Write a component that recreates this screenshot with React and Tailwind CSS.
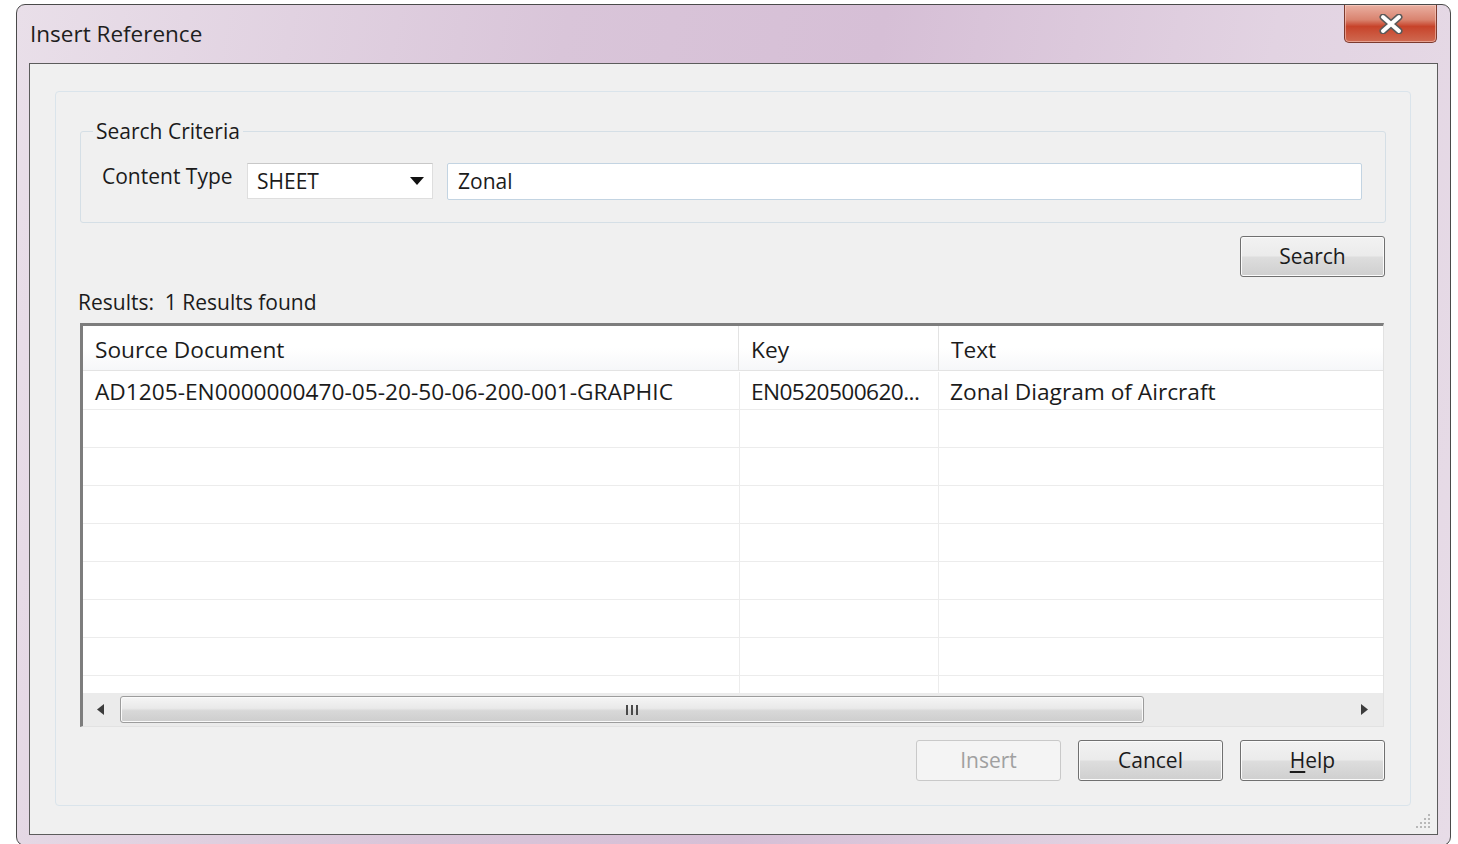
export default function App() {
  const rows = Array.from({ length: 9 });
  const btn =
    "w-[145px] h-[41px] rounded-[3px] border border-[#707070] bg-[linear-gradient(#f2f2f2_0%,#ebebeb_48%,#dddddd_52%,#cfcfcf_100%)] shadow-[inset_0_0_0_1px_#fbfbfb] flex items-center justify-center text-[#1b1b1b]";

  return (
    <div className="w-[1458px] h-[844px] bg-white overflow-hidden pl-[16px] pt-[4px] font-['Open_Sans',sans-serif] text-[21px] text-[#1b1b1b]">
      {/* window frame */}
      <div className="relative w-[1435px] h-[842px] rounded-[9px] border border-[#4a4a4a] bg-[linear-gradient(100deg,#e9dfe9_0%,#d9c5d9_35%,#d6bfd6_55%,#e2d3e2_80%,#e7dce7_100%)] px-[12px]">
        {/* title bar */}
        <div className="h-[58px] flex items-center pl-[1px]">
          <span className="text-[22.5px] leading-none text-[#1e1e1e]">Insert Reference</span>
        </div>
        <div className="absolute top-0 right-[13px] w-[93px] h-[38px] rounded-b-[5px] border border-t-0 border-[#7c3a2e] bg-[linear-gradient(#eab0a2_0%,#d9836f_40%,#c7432a_58%,#cf6a52_100%)] shadow-[inset_0_0_0_1px_rgba(255,220,210,0.5)] flex items-center justify-center">
          <svg width="26" height="20" viewBox="0 0 26 20">
            <path d="M5 3 L21 17 M21 3 L5 17" stroke="#5a5a5a" strokeWidth="7" strokeLinecap="round" />
            <path d="M5 3 L21 17 M21 3 L5 17" stroke="#ffffff" strokeWidth="4" strokeLinecap="round" />
          </svg>
        </div>

        {/* client area */}
        <div className="relative h-[772px] border border-[#5c5c5c] bg-[#f0f0f0]">
          <div className="ml-[25px] mt-[27px] w-[1356px] h-[715px] rounded-[4px] border border-[#dae4eb] px-[24px] pt-[39px] flex flex-col">
            {/* search criteria group */}
            <div className="relative h-[92px] rounded-[3px] border border-[#d5dfe6] pl-[21px] pt-[31px] flex items-start">
              <span className="absolute left-[12px] top-[-14px] px-[3px] bg-[#f0f0f0] leading-[26px]">Search Criteria</span>
              <span className="w-[145px] leading-[26px]">Content Type</span>
              <div className="w-[186px] h-[36px] border border-[#dedede] border-t-[#c8c8c8] bg-white flex items-center pl-[9px] pr-[8px]">
                <span className="flex-1 leading-none">SHEET</span>
                <svg width="14" height="8" viewBox="0 0 14 8">
                  <path d="M0 0 H14 L7 8 Z" fill="#111" />
                </svg>
              </div>
              <div className="ml-[14px] w-[915px] h-[37px] rounded-[2px] border border-[#c3d4e2] bg-white flex items-center pl-[10px]">
                <span className="leading-none">Zonal</span>
              </div>
            </div>

            <div className="mt-[13px] flex justify-end pr-[1px]">
              <div className={btn}>Search</div>
            </div>

            <div className="mt-[12px] ml-[-2px] leading-[26px]">Results:&nbsp;&nbsp;1 Results found</div>

            {/* results table */}
            <div className="mt-[8px] w-[1304px] h-[404px] border-t-[3px] border-l-[3px] border-r border-b border-t-[#7d7d7d] border-l-[#7d7d7d] border-r-[#e2e2e2] border-b-[#e2e2e2] bg-white flex flex-col text-[22.7px]">
              <div className="h-[45px] flex border-b border-[#e3e3e3] bg-[linear-gradient(#ffffff_0%,#ffffff_50%,#f6f7f9_100%)]">
                <div className="w-[656px] pl-[12px] pt-[4px] flex items-center border-r border-[#e3e3e3]">Source Document</div>
                <div className="w-[200px] pl-[12px] pt-[4px] flex items-center border-r border-[#e3e3e3]">Key</div>
                <div className="flex-1 pl-[12px] pt-[4px] flex items-center">Text</div>
              </div>
              <div className="h-[322px] overflow-hidden pt-[1px]">
                {rows.map((_, i) => (
                  <div key={i} className="h-[38px] flex border-b border-[#ececec]">
                    <div className="w-[657px] pl-[12px] pt-[3px] flex items-center border-r border-[#ececec]">
                      {i === 0 ? "AD1205-EN0000000470-05-20-50-06-200-001-GRAPHIC" : ""}
                    </div>
                    <div className="w-[199px] pl-[11px] pt-[3px] flex items-center border-r border-[#ececec] tracking-[-0.6px]">
                      {i === 0 ? "EN0520500620..." : ""}
                    </div>
                    <div className="flex-1 pl-[11px] pt-[3px] flex items-center">
                      {i === 0 ? "Zonal Diagram of Aircraft" : ""}
                    </div>
                  </div>
                ))}
              </div>
              {/* horizontal scroll bar */}
              <div className="flex-1 bg-[#ebebeb] flex items-center">
                <div className="w-[35px] h-full flex items-center justify-center">
                  <svg width="7" height="11" viewBox="0 0 7 11">
                    <path d="M7 0 V11 L0 5.5 Z" fill="#3c3c3c" />
                  </svg>
                </div>
                <div className="ml-[2px] w-[1024px] h-[27px] rounded-[3px] border border-[#9c9c9c] bg-[linear-gradient(#f5f5f5_0%,#e9e9e9_45%,#d8d8d8_55%,#cdcdcd_100%)] shadow-[inset_0_0_0_1px_#fafafa] flex items-center justify-center">
                  <svg width="14" height="12" viewBox="0 0 14 12">
                    <path d="M2 1 V11 M7 1 V11 M12 1 V11" stroke="#4a4a4a" strokeWidth="2" />
                  </svg>
                </div>
                <div className="flex-1 h-full flex items-center justify-end pr-[15px]">
                  <svg width="7" height="11" viewBox="0 0 7 11">
                    <path d="M0 0 V11 L7 5.5 Z" fill="#3c3c3c" />
                  </svg>
                </div>
              </div>
            </div>

            {/* dialog buttons */}
            <div className="mt-[13px] flex justify-end gap-[17px] pr-[1px]">
              <div className="w-[145px] h-[41px] rounded-[3px] border border-[#c9c9c9] bg-[#f4f4f4] flex items-center justify-center text-[#a0a0a0]">Insert</div>
              <div className={btn}>Cancel</div>
              <div className={btn}>
                <span>
                  <span className="underline underline-offset-[3px]">H</span>elp
                </span>
              </div>
            </div>
          </div>

          {/* resize grip */}
          <svg className="absolute right-[6px] bottom-[5px]" width="16" height="16" viewBox="0 0 16 16">
            {[[13, 3], [9, 7], [13, 7], [5, 11], [9, 11], [13, 11], [1, 15], [5, 15], [9, 15], [13, 15]].map(([x, y], k) => (
              <rect key={k} x={x} y={y - 2} width="2" height="2" fill="#b8b8b8" />
            ))}
          </svg>
        </div>
      </div>
    </div>
  );
}
